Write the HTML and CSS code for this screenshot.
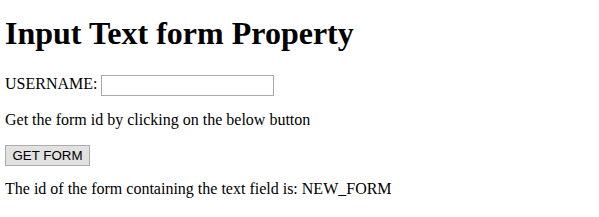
FILE: index.html
```html
<!DOCTYPE html>
<html lang="en">
  <head>
    <meta charset="UTF-8" />
    <title>Input Text form Property</title>
    <link rel="stylesheet" href="styles.css">
  </head>
  <body>
    <h1 class="title">Input Text form Property</h1>
    <form id="NEW_FORM" class="user-form">
      USERNAME: <input type="text" class="text-field" id="username" />
    </form>
    <p class="hint">Get the form id by clicking on the below button</p>
    <button type="button" class="get-btn">GET FORM</button>
    <p class="result">The id of the form containing the text field is: NEW_FORM</p>
  </body>
</html>
```

FILE: styles.css
```css
body {
  margin: 8px 5px;
  font-family: "Liberation Serif", "Times New Roman", serif;
  font-size: 16px;
  color: #000;
  background: #fff;
}

.title {
  font-size: 32px;
  font-weight: bold;
  margin: 7px 0 23px;
}

.user-form {
  margin: 0;
  height: 21px;
}

.text-field {
  box-sizing: border-box;
  width: 173px;
  height: 21px;
  padding: 0 2px;
  border: 1px solid #a9a9a9;
  font-size: 13px;
  vertical-align: middle;
}

.hint {
  margin: 15px 0 16px;
}

.result {
  margin: 14px 0 0;
}

.get-btn {
  display: block;
  box-sizing: border-box;
  width: 85px;
  height: 21px;
  padding: 0 6px;
  font-family: "Liberation Sans", Arial, sans-serif;
  font-size: 13.33px;
  background: #e1e1e1;
  border: 1px solid #adadad;
  border-radius: 0;
  color: #000;
}
```
